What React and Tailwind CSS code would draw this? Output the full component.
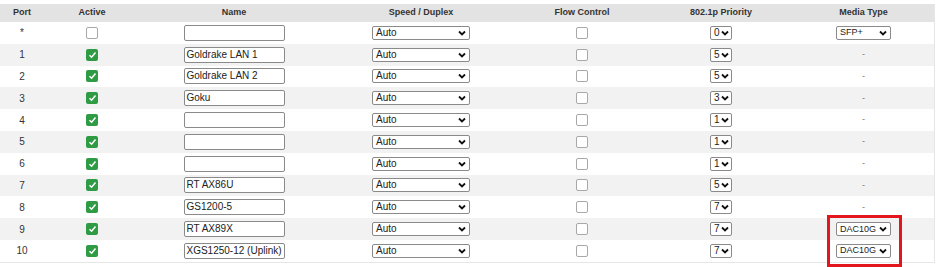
import React from 'react';

const rows = [
  { port: '*', active: false, name: '', prio: '0', media: 'SFP+' },
  { port: '1', active: true, name: 'Goldrake LAN 1', prio: '5', media: '-' },
  { port: '2', active: true, name: 'Goldrake LAN 2', prio: '5', media: '-' },
  { port: '3', active: true, name: 'Goku', prio: '3', media: '-' },
  { port: '4', active: true, name: '', prio: '1', media: '-' },
  { port: '5', active: true, name: '', prio: '1', media: '-' },
  { port: '6', active: true, name: '', prio: '1', media: '-' },
  { port: '7', active: true, name: 'RT AX86U', prio: '5', media: '-' },
  { port: '8', active: true, name: 'GS1200-5', prio: '7', media: '-' },
  { port: '9', active: true, name: 'RT AX89X', prio: '7', media: 'DAC10G' },
  { port: '10', active: true, name: 'XGS1250-12 (Uplink)', prio: '7', media: 'DAC10G' },
];

const cols = 'grid grid-cols-[44px_96px_188px_186px_136px_142px_143px] items-center';

const Chevron = () => (
  <svg width="8" height="6" viewBox="0 0 8 6" className="shrink-0">
    <path d="M1 1.5 L4 4.5 L7 1.5" fill="none" stroke="#111" strokeWidth="1.8" />
  </svg>
);

const Select = ({ value, className }) => (
  <div className={`flex items-center justify-between h-[14px] bg-white border border-[#8a8a8a] rounded-[2px] pl-[3px] pr-[3px] leading-none text-[#222] ${className}`}>
    <span>{value}</span>
    <Chevron />
  </div>
);

const Check = ({ on }) =>
  on ? (
    <div className="w-[12px] h-[12px] rounded-[2px] bg-[#2f9b45] flex items-center justify-center">
      <svg width="9" height="8" viewBox="0 0 9 8">
        <path d="M1.5 4.2 L3.6 6.2 L7.5 1.6" fill="none" stroke="#fff" strokeWidth="1.5" />
      </svg>
    </div>
  ) : (
    <div className="w-[12px] h-[12px] rounded-[2px] bg-white border border-[#a8a8a8]" />
  );

export default function App() {
  return (
    <div className="w-[940px] h-[267px] bg-white pt-[4px] relative font-['Liberation_Sans',Arial,sans-serif] text-[#333]">
      <div className="w-[935px] border-r border-b border-[#e6e6e6]">
        <div className={`${cols} h-[18px] bg-[#e3e3e3] text-[9px] font-bold text-[#333] text-center`}>
          <div>Port</div>
          <div>Active</div>
          <div>Name</div>
          <div>Speed / Duplex</div>
          <div>Flow Control</div>
          <div>802.1p Priority</div>
          <div>Media Type</div>
        </div>
        {rows.map((r, i) => (
          <div key={r.port} className={`${cols} h-[21.8px] ${i % 2 === 1 ? 'bg-[#f2f2f2]' : 'bg-white'}`}>
            <div className="text-center text-[10px]">{r.port}</div>
            <div className="flex justify-center"><Check on={r.active} /></div>
            <div className="flex justify-center">
              <div className="w-[101px] h-[16px] bg-white border border-[#8a8a8a] rounded-[2px] px-[2px] flex items-center text-[10px] leading-none text-[#222] whitespace-nowrap overflow-hidden">
                {r.name}
              </div>
            </div>
            <div className="flex justify-center"><Select value="Auto" className="w-[98px] text-[10px]" /></div>
            <div className="flex justify-center"><Check on={false} /></div>
            <div className="flex justify-center"><Select value={r.prio} className="w-[22px] text-[10px] pr-[2px] gap-[1px]" /></div>
            <div className="flex justify-center">
              {r.media === '-' ? (
                <span className="text-[9px] text-[#777]">-</span>
              ) : (
                <Select value={r.media} className="w-[55px] text-[9px]" />
              )}
            </div>
          </div>
        ))}
      </div>
      <div className="absolute left-[827px] top-[215px] w-[75px] h-[52px] border-[3px] border-[#e3151d]" />
    </div>
  );
}
